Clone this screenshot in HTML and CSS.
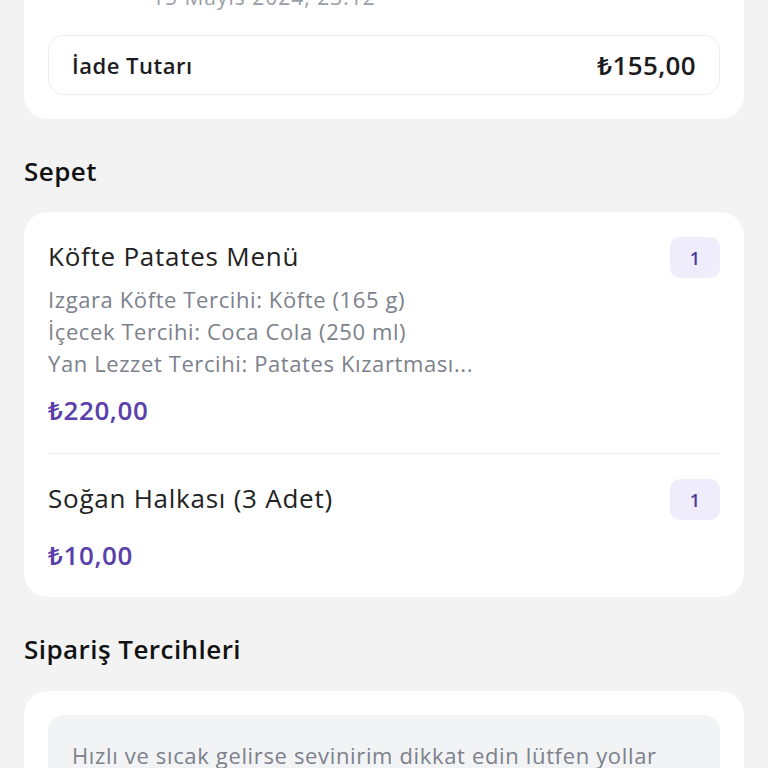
FILE: index.html
```html
<!DOCTYPE html>
<html lang="tr">
<head>
<meta charset="utf-8">
<link rel="stylesheet" href="styles.css">
</head>
<body>
<div class="page">
  <section class="card card-top">
    <div class="date">15 Mayıs 2024, 23:12</div>
    <div class="refund">
      <span class="refund-label">İade Tutarı</span>
      <span class="refund-value">₺155,00</span>
    </div>
  </section>

  <h2 class="section-title">Sepet</h2>
  <section class="card card-list">
    <div class="item">
      <div class="item-main">
        <div class="item-title">Köfte Patates Menü</div>
        <div class="item-options">
          <div>Izgara Köfte Tercihi: Köfte (165 g)</div>
          <div>İçecek Tercihi: Coca Cola (250 ml)</div>
          <div>Yan Lezzet Tercihi: Patates Kızartması...</div>
        </div>
        <div class="item-price">₺220,00</div>
      </div>
      <span class="qty">1</span>
    </div>
    <div class="item">
      <div class="item-main">
        <div class="item-title">Soğan Halkası (3 Adet)</div>
        <div class="item-price item-price-b">₺10,00</div>
      </div>
      <span class="qty">1</span>
    </div>
  </section>

  <h2 class="section-title section-title-b">Sipariş Tercihleri</h2>
  <section class="card card-note">
    <div class="note">Hızlı ve sıcak gelirse sevinirim dikkat edin lütfen yollar</div>
  </section>
</div>
</body>
</html>
```

FILE: styles.css
```css
* { box-sizing: border-box; }
html, body { margin: 0; padding: 0; }
body {
  background: #f3f3f4;
  font-family: "Open Sans", "Noto Sans", sans-serif;
  color: #1c1c1e;
  overflow: hidden;
  height: 768px;
}
.page { padding: 0 24px; }
.card {
  background: #ffffff;
  border-radius: 24px;
  padding: 24px;
}
.card-top { margin-top: -42px; }
.date {
  padding-left: 104px;
  font-size: 21px;
  line-height: 30px;
  letter-spacing: 1px;
  color: #9a9ea6;
  white-space: nowrap;
}
.refund {
  margin-top: 23px;
  height: 60px;
  border: 1px solid #ededee;
  border-radius: 16px;
  padding: 0 23px;
  display: flex;
  align-items: center;
  justify-content: space-between;
}
.refund-label { font-size: 22px; font-weight: 600; letter-spacing: 0.5px; }
.refund-value { font-size: 26px; font-weight: 600; letter-spacing: 0.35px; }
.section-title {
  margin: 34px 0 23px;
  font-size: 26px;
  line-height: 36px;
  font-weight: 600;
  letter-spacing: 0.45px;
  color: #111;
}
.section-title-b { margin-bottom: 24px; }
.card-list { padding: 0 24px; }
.item {
  display: flex;
  align-items: flex-start;
  justify-content: space-between;
  padding: 24px 0 25px;
}
.item:last-child { padding-bottom: 24px; }
.item + .item { border-top: 1px solid #ececee; }
.item-title { font-size: 26px; line-height: 40px; letter-spacing: 0.75px; color: #222; }
.item-options {
  margin-top: 7px;
  font-size: 22px;
  line-height: 32px;
  letter-spacing: 0.6px;
  color: #7c818b;
}
.item-price {
  margin-top: 13px;
  font-size: 26px;
  line-height: 36px;
  font-weight: 600;
  letter-spacing: 0.6px;
  color: #5a40aa;
}
.item-price-b { margin-top: 19px; }
.qty {
  width: 50px;
  height: 41px;
  margin-top: 1px;
  border-radius: 10px;
  background: #efedfb;
  color: #4b3a99;
  font-size: 18px;
  font-weight: 600;
  display: flex;
  align-items: center;
  justify-content: center;
}
.card-note { padding-bottom: 24px; }
.note {
  background: #f2f3f5;
  border-radius: 16px;
  padding: 24px 24px;
  font-size: 22px;
  line-height: 32px;
  color: #7c818b;
  letter-spacing: 0.65px;
  white-space: nowrap;
}
```
